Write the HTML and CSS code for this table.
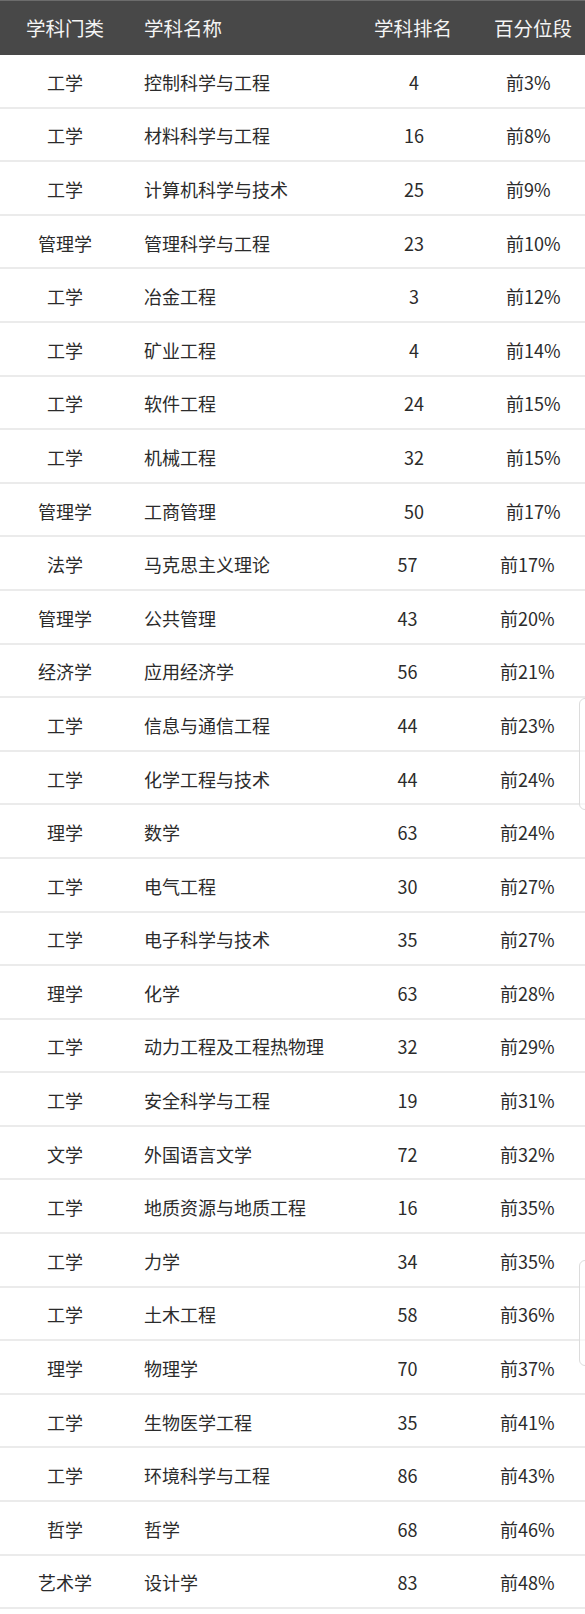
FILE: index.html
```html
<!DOCTYPE html>
<html lang="zh">
<head>
<meta charset="utf-8">
<link rel="stylesheet" href="styles.css">
</head>
<body>
<div class="table">
  <div class="row head">
    <div class="c1">学科门类</div><div class="c2">学科名称</div><div class="c3">学科排名</div><div class="c4">百分位段</div>
  </div>
  <div class="row"><div class="c1">工学</div><div class="c2">控制科学与工程</div><div class="c3">4</div><div class="c4">前3%</div></div>
  <div class="row"><div class="c1">工学</div><div class="c2">材料科学与工程</div><div class="c3">16</div><div class="c4">前8%</div></div>
  <div class="row"><div class="c1">工学</div><div class="c2">计算机科学与技术</div><div class="c3">25</div><div class="c4">前9%</div></div>
  <div class="row"><div class="c1">管理学</div><div class="c2">管理科学与工程</div><div class="c3">23</div><div class="c4">前10%</div></div>
  <div class="row"><div class="c1">工学</div><div class="c2">冶金工程</div><div class="c3">3</div><div class="c4">前12%</div></div>
  <div class="row"><div class="c1">工学</div><div class="c2">矿业工程</div><div class="c3">4</div><div class="c4">前14%</div></div>
  <div class="row"><div class="c1">工学</div><div class="c2">软件工程</div><div class="c3">24</div><div class="c4">前15%</div></div>
  <div class="row"><div class="c1">工学</div><div class="c2">机械工程</div><div class="c3">32</div><div class="c4">前15%</div></div>
  <div class="row"><div class="c1">管理学</div><div class="c2">工商管理</div><div class="c3">50</div><div class="c4">前17%</div></div>
  <div class="row s"><div class="c1">法学</div><div class="c2">马克思主义理论</div><div class="c3">57</div><div class="c4">前17%</div></div>
  <div class="row s"><div class="c1">管理学</div><div class="c2">公共管理</div><div class="c3">43</div><div class="c4">前20%</div></div>
  <div class="row s"><div class="c1">经济学</div><div class="c2">应用经济学</div><div class="c3">56</div><div class="c4">前21%</div></div>
  <div class="row s"><div class="c1">工学</div><div class="c2">信息与通信工程</div><div class="c3">44</div><div class="c4">前23%</div></div>
  <div class="row s"><div class="c1">工学</div><div class="c2">化学工程与技术</div><div class="c3">44</div><div class="c4">前24%</div></div>
  <div class="row s"><div class="c1">理学</div><div class="c2">数学</div><div class="c3">63</div><div class="c4">前24%</div></div>
  <div class="row s"><div class="c1">工学</div><div class="c2">电气工程</div><div class="c3">30</div><div class="c4">前27%</div></div>
  <div class="row s"><div class="c1">工学</div><div class="c2">电子科学与技术</div><div class="c3">35</div><div class="c4">前27%</div></div>
  <div class="row s"><div class="c1">理学</div><div class="c2">化学</div><div class="c3">63</div><div class="c4">前28%</div></div>
  <div class="row s"><div class="c1">工学</div><div class="c2">动力工程及工程热物理</div><div class="c3">32</div><div class="c4">前29%</div></div>
  <div class="row s"><div class="c1">工学</div><div class="c2">安全科学与工程</div><div class="c3">19</div><div class="c4">前31%</div></div>
  <div class="row s"><div class="c1">文学</div><div class="c2">外国语言文学</div><div class="c3">72</div><div class="c4">前32%</div></div>
  <div class="row s"><div class="c1">工学</div><div class="c2">地质资源与地质工程</div><div class="c3">16</div><div class="c4">前35%</div></div>
  <div class="row s"><div class="c1">工学</div><div class="c2">力学</div><div class="c3">34</div><div class="c4">前35%</div></div>
  <div class="row s"><div class="c1">工学</div><div class="c2">土木工程</div><div class="c3">58</div><div class="c4">前36%</div></div>
  <div class="row s"><div class="c1">理学</div><div class="c2">物理学</div><div class="c3">70</div><div class="c4">前37%</div></div>
  <div class="row s"><div class="c1">工学</div><div class="c2">生物医学工程</div><div class="c3">35</div><div class="c4">前41%</div></div>
  <div class="row s"><div class="c1">工学</div><div class="c2">环境科学与工程</div><div class="c3">86</div><div class="c4">前43%</div></div>
  <div class="row s"><div class="c1">哲学</div><div class="c2">哲学</div><div class="c3">68</div><div class="c4">前46%</div></div>
  <div class="row s"><div class="c1">艺术学</div><div class="c2">设计学</div><div class="c3">83</div><div class="c4">前48%</div></div>
  <div class="edge edge-a"></div>
  <div class="edge edge-b"></div>
</div>
</body>
</html>
```

FILE: styles.css
```css
html, body {
  margin: 0;
  padding: 0;
  background: #ffffff;
}
body {
  font-family: "Noto Sans CJK SC", "Noto Sans", sans-serif;
  color: #2b2b2b;
  width: 585px;
  overflow: hidden;
}
.table {
  position: relative;
  width: 585px;
}
.row {
  display: grid;
  grid-template-columns: 130px 220px 128px 107px;
  align-items: center;
  height: 53.6px;
  box-sizing: border-box;
  border-bottom: 2px solid #ebebeb;
  font-size: 18px;
  line-height: 1;
}
.row > div {
  white-space: nowrap;
  padding-top: 2px;
}
.c1 { text-align: center; }
.c2 { padding-left: 14px; }
.c3 { text-align: center; }
.c4 { padding-left: 28px; }
.row.s .c3 { padding-right: 13px; }
.row.s .c4 { padding-left: 22px; }
.row.head {
  height: 55px;
  background: #484848;
  border-top: 1px solid #6c6c6c;
  border-bottom: none;
  color: #f4f4f4;
  font-size: 19.5px;
}
.row.head > div { padding-top: 0; }
.row.head .c3 { padding-right: 2px; }
.row.head .c4 { padding-left: 16px; }
.edge {
  position: absolute;
  left: 579px;
  width: 20px;
  border: 1.5px solid #dcdcdc;
  border-radius: 6px;
  background: rgba(255, 255, 255, 0.6);
}
.edge-a { top: 698px; height: 110px; }
.edge-b { top: 1260px; height: 104px; }
```
